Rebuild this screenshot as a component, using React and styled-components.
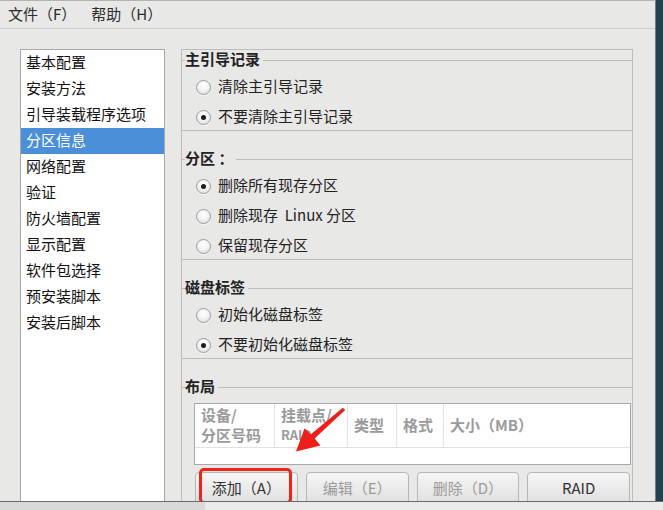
import React from "react";
import styled, { createGlobalStyle, css } from "styled-components";

const GlobalStyle = createGlobalStyle`
  html, body { margin: 0; padding: 0; background: #24424e; }
  body { font-family: "Noto Sans CJK SC", "Noto Sans", sans-serif; }
  * { box-sizing: border-box; }
`;

const Screen = styled.div`
  width: 663px;
  height: 510px;
  display: flex;
  flex-direction: column;
  overflow: hidden;
`;

const Desktop = styled.div`
  height: 501px;
  display: flex;
  background: #24424e;
`;

const Window = styled.div`
  position: relative;
  width: 656px;
  height: 100%;
  display: flex;
  flex-direction: column;
  background: #e8e8e7;
  border-top: 1px solid #b4b4b4;
  border-right: 1px solid #6f7f85;
  overflow: hidden;
`;

const MenuBar = styled.div`
  height: 28px;
  flex: none;
  display: flex;
  align-items: center;
  gap: 15px;
  padding: 0 0 2px 8px;
  border-bottom: 1px solid #cfcfcf;
`;

const MenuItem = styled.span`
  font-size: 15px;
  line-height: 20px;
  color: #2b2b2b;
`;

const Body = styled.div`
  flex: 1;
  min-height: 0;
  display: flex;
  gap: 16px;
  padding: 20px 22px 0 20px;
`;

const NavList = styled.ul`
  width: 145px;
  flex: none;
  margin: 0;
  padding: 0;
  list-style: none;
  background: #fff;
  border: 1px solid #a8a8a8;
  border-bottom: none;
`;

const NavItem = styled.li`
  height: 26px;
  line-height: 24px;
  padding-left: 5px;
  font-size: 15px;
  color: #111;
  white-space: nowrap;
  ${(p) =>
    p.$selected &&
    css`
      background: #4a8fd8;
      color: #fff;
    `}
`;

const Pane = styled.div`
  width: 452px;
  flex: none;
  display: flex;
  flex-direction: column;
  gap: 18px;
  border: 1px solid #bdbdbd;
  border-bottom: none;
`;

const Group = styled.fieldset`
  margin: 0;
  min-width: 0;
  padding: ${(p) => (p.$open ? "6px 0 0" : "4px 0 0")};
  border: none;
  border-top: 1px solid #bcbcbc;
  border-bottom: ${(p) => (p.$open ? "none" : "1px solid #bcbcbc")};
  ${(p) => p.$open && css`flex: 1;`}
`;

const Legend = styled.legend`
  margin-left: 3px;
  padding: 0 3px 2px 0;
  height: 20px;
  font-size: 15px;
  line-height: 18px;
  font-weight: bold;
  color: #222;
`;

const Options = styled.div`
  display: flex;
  flex-direction: column;
  gap: 4px;
  padding-left: 14px;
`;

const Option = styled.label`
  height: 26px;
  display: flex;
  align-items: center;
  gap: 7px;
  font-size: 15px;
  color: #222;
  white-space: pre;
`;

const OptionText = styled.span`
  line-height: 20px;
  padding-bottom: 2px;
`;

const RadioDot = styled.span`
  width: 15px;
  height: 15px;
  flex: none;
  border-radius: 50%;
  border: 1px solid #9c9c9c;
  background: radial-gradient(circle at 50% 35%, #ffffff 0%, #f4f4f4 45%, #d6d6d6 100%);
  box-shadow: 0 1px 0 rgba(255, 255, 255, 0.7);
  display: flex;
  align-items: center;
  justify-content: center;
  &::after {
    content: "";
    width: 5px;
    height: 5px;
    border-radius: 50%;
    background: ${(p) => (p.$checked ? "#1c1c1c" : "transparent")};
  }
`;

const LayoutBody = styled.div`
  padding: 0 1px 0 12px;
`;

const Table = styled.div`
  background: #fff;
  border: 1px solid #a9a9a9;
`;

const HeadRow = styled.div`
  height: 44px;
  display: grid;
  grid-template-columns: 80px 73px 49px 47px 1fr;
  border-bottom: 1px solid #e2e2e2;
`;

const HeadCell = styled.div`
  display: flex;
  flex-direction: column;
  justify-content: center;
  padding: 0 6px 2px;
  border-right: ${(p) => (p.$last ? "none" : "1px solid #e2e2e2")};
  font-size: 15px;
  line-height: 20px;
  font-weight: bold;
  color: #9a9a9a;
  white-space: nowrap;
  overflow: hidden;
`;

const SmallLine = styled.span`
  font-size: 13px;
`;

const EmptyRow = styled.div`
  height: 16px;
`;

const ButtonRow = styled.div`
  display: flex;
  gap: 8px;
  margin-top: 7px;
  padding: 0 1px 0 1px;
`;

const Button = styled.button`
  flex: 1;
  height: 34px;
  padding: 0 0 4px;
  border: 1px solid #b6b6b6;
  border-radius: 4px;
  background: linear-gradient(#f6f6f6, #dedede);
  font-family: inherit;
  font-size: 15px;
  color: ${(p) => (p.disabled ? "#9b9b9b" : "#333")};
`;

const Highlight = styled.div`
  position: absolute;
  left: 199px;
  top: 467px;
  width: 93px;
  height: 36px;
  border: 3px solid #f1231b;
  border-radius: 5px;
  pointer-events: none;
`;

const ArrowSvg = styled.svg`
  position: absolute;
  left: 290px;
  top: 400px;
  width: 60px;
  height: 60px;
  pointer-events: none;
`;

const BottomStrip = styled.div`
  flex: 1;
  border-top: 1px solid #6a6a6a;
  background: linear-gradient(90deg, #d9d9d9 0 205px, #ebebeb 205px);
`;

const navItems = [
  "基本配置",
  "安装方法",
  "引导装载程序选项",
  "分区信息",
  "网络配置",
  "验证",
  "防火墙配置",
  "显示配置",
  "软件包选择",
  "预安装脚本",
  "安装后脚本",
];

const groups = [
  {
    title: "主引导记录",
    options: [
      { label: "清除主引导记录", checked: false },
      { label: "不要清除主引导记录", checked: true },
    ],
  },
  {
    title: "分区 ：",
    options: [
      { label: "删除所有现存分区", checked: true },
      { label: "删除现存  Linux 分区", checked: false },
      { label: "保留现存分区", checked: false },
    ],
  },
  {
    title: "磁盘标签",
    options: [
      { label: "初始化磁盘标签", checked: false },
      { label: "不要初始化磁盘标签", checked: true },
    ],
  },
];

export default function App() {
  return (
    <>
      <GlobalStyle />
      <Screen>
        <Desktop>
          <Window>
            <MenuBar>
              <MenuItem>文件（F）</MenuItem>
              <MenuItem>帮助（H）</MenuItem>
            </MenuBar>
            <Body>
              <NavList>
                {navItems.map((item) => (
                  <NavItem key={item} $selected={item === "分区信息"}>
                    {item}
                  </NavItem>
                ))}
              </NavList>
              <Pane>
                {groups.map((g) => (
                  <Group key={g.title}>
                    <Legend>{g.title}</Legend>
                    <Options>
                      {g.options.map((o) => (
                        <Option key={o.label}>
                          <RadioDot $checked={o.checked} />
                          <OptionText>{o.label}</OptionText>
                        </Option>
                      ))}
                    </Options>
                  </Group>
                ))}
                <Group $open>
                  <Legend>布局</Legend>
                  <LayoutBody>
                    <Table>
                      <HeadRow>
                        <HeadCell>
                          <span>设备/</span>
                          <span>分区号码</span>
                        </HeadCell>
                        <HeadCell>
                          <span>挂载点/</span>
                          <SmallLine>RAID</SmallLine>
                        </HeadCell>
                        <HeadCell>类型</HeadCell>
                        <HeadCell>格式</HeadCell>
                        <HeadCell $last>大小（MB）</HeadCell>
                      </HeadRow>
                      <EmptyRow />
                    </Table>
                    <ButtonRow>
                      <Button>添加（A）</Button>
                      <Button disabled>编辑（E）</Button>
                      <Button disabled>删除（D）</Button>
                      <Button>RAID</Button>
                    </ButtonRow>
                  </LayoutBody>
                </Group>
              </Pane>
            </Body>
            <Highlight />
            <ArrowSvg viewBox="290 401 60 60">
              <polygon
                points="345.2,410 314.6,438.6 320.5,445.5 296,451.5 304.6,428.2 310.6,434.4 342.8,407.8"
                fill="#ee1f1a"
              />
            </ArrowSvg>
          </Window>
        </Desktop>
        <BottomStrip />
      </Screen>
    </>
  );
}
